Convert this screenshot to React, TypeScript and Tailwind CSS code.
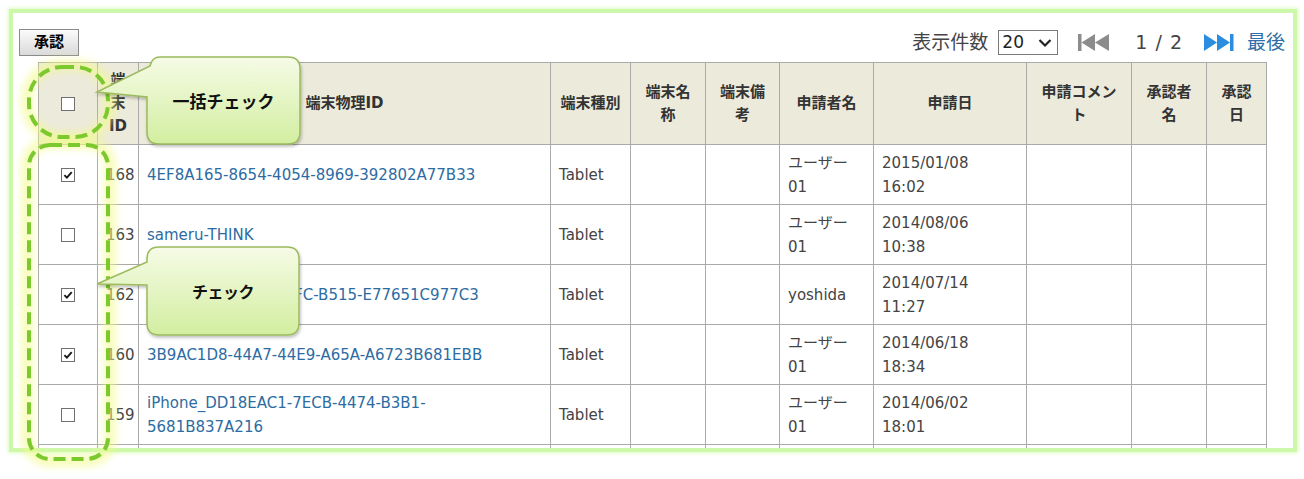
import React from 'react';

const font = "font-['DejaVu_Sans','Noto_Sans_CJK_JP',sans-serif]";

type Row = {
  checked: boolean;
  id: string;
  phys: string[];
  user: string[];
  date: string[];
};

const rows: Row[] = [
  { checked: true, id: '168', phys: ['4EF8A165-8654-4054-8969-392802A77B33'], user: ['ユーザー', '01'], date: ['2015/01/08', '16:02'] },
  { checked: false, id: '163', phys: ['sameru-THINK'], user: ['ユーザー', '01'], date: ['2014/08/06', '10:38'] },
  { checked: true, id: '162', phys: ['5A2D3F10-6C8E-41FC-B515-E77651C977C3'], user: ['yoshida'], date: ['2014/07/14', '11:27'] },
  { checked: true, id: '160', phys: ['3B9AC1D8-44A7-44E9-A65A-A6723B681EBB'], user: ['ユーザー', '01'], date: ['2014/06/18', '18:34'] },
  { checked: false, id: '159', phys: ['iPhone_DD18EAC1-7ECB-4474-B3B1-', '5681B837A216'], user: ['ユーザー', '01'], date: ['2014/06/02', '18:01'] },
];

function Box({ checked }: { checked: boolean }) {
  return (
    <span className="inline-flex h-[14px] w-[14px] items-center justify-center border border-[#707070] bg-white align-middle">
      {checked && (
        <svg width="10" height="10" viewBox="0 0 10 10">
          <path d="M1.4 5.2 L3.9 7.7 L8.7 2.1" fill="none" stroke="#1a1a1a" strokeWidth="1.9" />
        </svg>
      )}
    </span>
  );
}

function Lines({ items }: { items: string[] }) {
  return (
    <>
      {items.map((t, i) => (
        <React.Fragment key={i}>
          {i > 0 && <br />}
          {t}
        </React.Fragment>
      ))}
    </>
  );
}

const th = 'border border-[#aaaaaa] bg-[#eceadb] px-[8px] text-center align-middle text-[15px] font-bold leading-[23px] text-[#333]';
const cell = 'border border-[#aaaaaa] px-[8px] align-middle text-[15px] leading-[24px]';
const td = `${cell} text-[#444]`;

export default function App() {
  return (
    <div className={`relative h-[479px] w-[1304px] overflow-hidden bg-white ${font}`}>
      <div className="ml-[9px] mt-[9px] h-[443px] w-[1288px] overflow-hidden border-4 border-[#cdf8a9] shadow-[0_0_4px_1px_#dcfbc0]">
        <div className="pl-[6px] pr-[8px] pt-[16px]">
          <div className="flex h-[27px] items-center justify-between">
            <button className="h-[27px] w-[60px] border border-[#8a8a8a] bg-gradient-to-b from-[#fbfbfb] to-[#dadada] text-[15px] font-bold text-black">
              承認
            </button>
            <div className="flex items-center text-[19px] text-[#444]">
              <span>表示件数</span>
              <div className="ml-[10px] flex h-[25px] w-[60px] items-center justify-between border border-[#7a7a7a] bg-white pl-[3px] pr-[5px]">
                <span className="text-[17px] leading-none text-[#222]">20</span>
                <svg width="14" height="10" viewBox="0 0 14 10">
                  <path d="M1.5 2 L7 7.5 L12.5 2" fill="none" stroke="#222" strokeWidth="2.2" />
                </svg>
              </div>
              <svg className="ml-[20px]" width="33" height="17" viewBox="0 0 33 17">
                <rect x="0" y="0" width="3.5" height="17" fill="#8c8c8c" />
                <path d="M3.5 8.5 L17 0 L17 17 Z" fill="#8c8c8c" />
                <path d="M17 8.5 L31 0 L31 17 Z" fill="#8c8c8c" />
              </svg>
              <span className="ml-[24px] tracking-[1px]">1 / 2</span>
              <svg className="ml-[21px]" width="30" height="17" viewBox="0 0 30 17">
                <path d="M0 0 L13 8.5 L0 17 Z" fill="#2a8de0" />
                <path d="M13 0 L26 8.5 L13 17 Z" fill="#2a8de0" />
                <rect x="26" y="0" width="3.5" height="17" fill="#2a8de0" />
              </svg>
              <span className="ml-[13px] text-[#2f6ea8]">最後</span>
            </div>
          </div>

          <table className="ml-[19px] mt-[6px] w-[1228px] table-fixed border-collapse border border-[#aaaaaa]">
            <colgroup>
              <col className="w-[59px]" />
              <col className="w-[41px]" />
              <col className="w-[412px]" />
              <col className="w-[80px]" />
              <col className="w-[75px]" />
              <col className="w-[74px]" />
              <col className="w-[94px]" />
              <col className="w-[153px]" />
              <col className="w-[105px]" />
              <col className="w-[75px]" />
              <col className="w-[60px]" />
            </colgroup>
            <thead>
              <tr className="h-[82px]">
                <th className={th}>
                  <Box checked={false} />
                </th>
                <th className={`${th} px-0`}>
                  端<br />末<br />ID
                </th>
                <th className={th}>端末物理ID</th>
                <th className={`${th} whitespace-nowrap px-0`}>端末種別</th>
                <th className={th}>
                  端末名<br />称
                </th>
                <th className={th}>
                  端末備<br />考
                </th>
                <th className={`${th} whitespace-nowrap`}>申請者名</th>
                <th className={th}>申請日</th>
                <th className={`${th} whitespace-nowrap`}>
                  申請コメン<br />ト
                </th>
                <th className={`${th} px-0`}>
                  承認者<br />名
                </th>
                <th className={`${th} px-0`}>
                  承認<br />日
                </th>
              </tr>
            </thead>
            <tbody>
              {rows.map((r) => (
                <tr key={r.id} className="h-[60px]">
                  <td className={`${td} text-center`}>
                    <Box checked={r.checked} />
                  </td>
                  <td className={`${td} px-[6px] text-right`}>{r.id}</td>
                  <td className={`${cell} text-[#2d6ca3]`}>
                    <Lines items={r.phys} />
                  </td>
                  <td className={td}>Tablet</td>
                  <td className={td}></td>
                  <td className={td}></td>
                  <td className={td}>
                    <Lines items={r.user} />
                  </td>
                  <td className={td}>
                    <Lines items={r.date} />
                  </td>
                  <td className={td}></td>
                  <td className={td}></td>
                  <td className={td}></td>
                </tr>
              ))}
              {/* next row, clipped by the frame */}
              <tr className="h-[60px]">
                {Array.from({ length: 11 }).map((_, i) => (
                  <td key={i} className={td}></td>
                ))}
              </tr>
            </tbody>
          </table>
        </div>
      </div>

      {/* annotation layer: dashed marks and callouts */}
      <svg className="pointer-events-none absolute left-0 top-0" width="1304" height="479" viewBox="0 0 1304 479">
        <defs>
          <filter id="glow" x="-50%" y="-50%" width="200%" height="200%">
            <feGaussianBlur stdDeviation="4" />
          </filter>
          <filter id="shadow" x="-20%" y="-20%" width="140%" height="140%">
            <feDropShadow dx="1" dy="2" stdDeviation="1.5" floodColor="#000" floodOpacity="0.25" />
          </filter>
          <linearGradient id="fill" x1="0" y1="0" x2="0" y2="1">
            <stop offset="0" stopColor="#f6fbe6" />
            <stop offset="1" stopColor="#d2eea0" />
          </linearGradient>
        </defs>
        <rect x="27" y="65" width="83" height="73" rx="34" fill="none" stroke="#f2fb8a" strokeWidth="10" opacity="0.7" filter="url(#glow)" />
        <rect x="27" y="143" width="83" height="318" rx="22" fill="none" stroke="#f2fb8a" strokeWidth="10" opacity="0.7" filter="url(#glow)" />
        <rect x="29" y="67" width="79" height="70" rx="33" fill="none" stroke="#7cc92e" strokeWidth="4" strokeDasharray="12 6" />
        <rect x="29" y="145" width="79" height="314" rx="21" fill="none" stroke="#7cc92e" strokeWidth="4" strokeDasharray="12 6" />
        <path
          d="M160 57 H288 Q300 57 300 69 V132 Q300 144 288 144 H159 Q147 144 147 132 V97 L97 92 L150 66 Q152 57 160 57 Z"
          fill="url(#fill)"
          stroke="#9cba5e"
          strokeWidth="1.5"
          filter="url(#shadow)"
        />
        <path
          d="M159 247 H287 Q299 247 299 259 V323 Q299 335 287 335 H159 Q147 335 147 323 V285 L97 284 L147 262 V259 Q147 247 159 247 Z"
          fill="url(#fill)"
          stroke="#9cba5e"
          strokeWidth="1.5"
          filter="url(#shadow)"
        />
      </svg>
      <div className="pointer-events-none absolute left-[147px] top-[57px] flex h-[87px] w-[153px] items-center justify-center font-['Noto_Sans_CJK_JP',sans-serif] text-[17px] font-bold text-[#111]">
        一括チェック
      </div>
      <div className="pointer-events-none absolute left-[147px] top-[247px] flex h-[88px] w-[152px] items-center justify-center font-['Noto_Sans_CJK_JP',sans-serif] text-[16px] font-bold tracking-[-0.5px] text-[#111]">
        チェック
      </div>
    </div>
  );
}
